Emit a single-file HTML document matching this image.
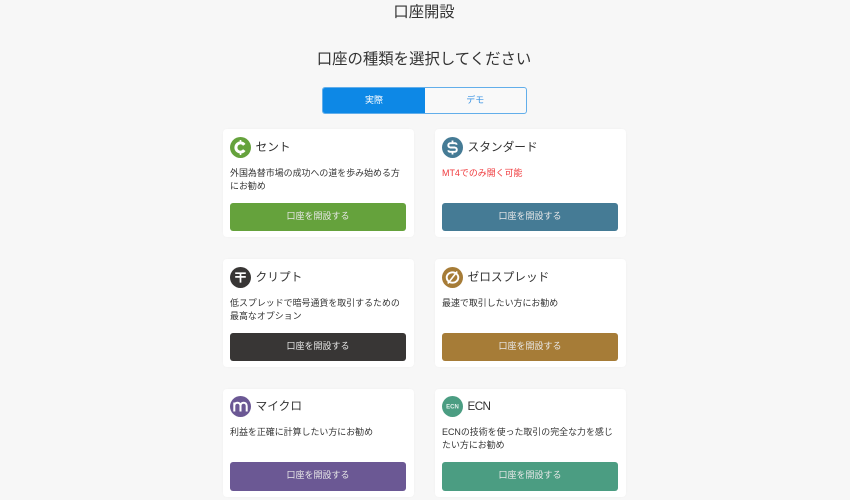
<!DOCTYPE html>
<html lang="ja">
<head>
<meta charset="utf-8">
<title>口座開設</title>
<style>
*{box-sizing:border-box;margin:0;padding:0}
html,body{width:850px;height:500px;overflow:hidden;background:#f7f7f7}
body{position:relative;font-family:"Liberation Sans","Noto Sans CJK JP",sans-serif;color:#333}
.wrap{position:absolute;left:0;top:0;width:850px;height:500px;filter:blur(.3px)}
.abs{position:absolute;white-space:nowrap}
.h1{left:-1px;width:850px;text-align:center;top:2px;font-size:15.3px;line-height:22px;color:#333}
.h2{left:-1px;width:850px;text-align:center;top:48px;font-size:15.4px;line-height:23px;color:#333}
.tabs{position:absolute;left:322px;top:87px;width:204.5px;height:27px;border:1px solid #62aeea;border-radius:3px;overflow:hidden;background:#f9f9f9;display:flex}
.tabs div{font-size:9px;line-height:25px;text-align:center}
.t1{width:102px;background:#0d88e6;color:#fff}
.t2{flex:1;color:#3a94e4}
.card{position:absolute;width:191px;height:108px;background:#fff;border-radius:4px;box-shadow:0 0 2px rgba(0,0,0,.03)}
.ic{position:absolute;left:7px;top:7.5px;width:21px;height:21px}
.name{position:absolute;left:32.5px;top:8.5px;font-size:11.7px;line-height:19px;white-space:nowrap;color:#333}
.desc{position:absolute;left:7px;top:38px;width:178px;font-size:8.95px;line-height:13px;color:#333}
.btn{position:absolute;left:7px;top:73.7px;width:176px;height:28.3px;border-radius:3px;color:#e8e8e8;font-size:9px;line-height:26px;text-align:center}
.r3 .ic{top:7px}
.r3 .name{top:7.5px}
.r3 .desc{top:37px}
.r3 .btn{top:73.3px}
</style>
</head>
<body>
<div class="wrap">
<div class="abs h1">口座開設</div>
<div class="abs h2">口座の種類を選択してください</div>
<div class="tabs"><div class="t1">実際</div><div class="t2">デモ</div></div>

<div class="card" style="left:223px;top:129px">
<svg class="ic" viewBox="0 0 21 21"><circle cx="10.5" cy="10.5" r="10.5" fill="#65a23c"/><path d="M14.27 7.86A4.6 4.6 0 1 0 14.27 13.14" fill="none" stroke="#fff" stroke-width="3"/><path d="M10.5 3v2M10.5 16v2" stroke="#fff" stroke-width="1.6"/></svg>
<div class="name">セント</div>
<div class="desc">外国為替市場の成功への道を歩み始める方<br>にお勧め</div>
<div class="btn" style="background:#65a23c">口座を開設する</div>
</div>

<div class="card" style="left:435px;top:129px">
<svg class="ic" viewBox="0 0 21 21"><circle cx="10.5" cy="10.5" r="10.5" fill="#457b95"/><path d="M14.6 7.8c0-1-.8-1.6-1.7-1.6H8.3c-1.2 0-2 .9-2 2.100s.8 2 2 2.200h4.500c1.200.2 2 1 2 2.200s-.8 2.100-2 2.100H8.100c-.9 0-1.700-.6-1.700-1.600" fill="none" stroke="#fff" stroke-width="1.900"/><path d="M10.500 3.500v2.800M10.500 14.700v2.800" stroke="#fff" stroke-width="1.800"/></svg>
<div class="name">スタンダード</div>
<div class="desc" style="color:#f0393c">MT4でのみ開く可能</div>
<div class="btn" style="background:#457b95">口座を開設する</div>
</div>

<div class="card" style="left:223px;top:259px">
<svg class="ic" viewBox="0 0 21 21"><circle cx="10.500" cy="10.500" r="10.500" fill="#383635"/><path d="M5.200 6.200h10.600M5.200 9.900h10.600M10.500 6.200v9.400" fill="none" stroke="#fff" stroke-width="1.700"/></svg>
<div class="name">クリプト</div>
<div class="desc">低スプレッドで暗号通貨を取引するための<br>最高なオプション</div>
<div class="btn" style="background:#383635">口座を開設する</div>
</div>

<div class="card" style="left:435px;top:259px">
<svg class="ic" viewBox="0 0 21 21"><circle cx="10.500" cy="10.500" r="10.500" fill="#a67c37"/><ellipse cx="10.500" cy="10.500" rx="5.800" ry="5.200" fill="none" stroke="#fff" stroke-width="1.900"/><path d="M5.800 16.500L15.200 4.500" stroke="#fff" stroke-width="1.600"/></svg>
<div class="name">ゼロスプレッド</div>
<div class="desc">最速で取引したい方にお勧め</div>
<div class="btn" style="background:#a67c37">口座を開設する</div>
</div>

<div class="card r3" style="left:223px;top:389px">
<svg class="ic" viewBox="0 0 21 21"><circle cx="10.500" cy="10.500" r="10.500" fill="#6b5894"/><path d="M4.300 15.500V6.500M4.300 10c0-4.400 6.200-4.400 6.200 0v5.500M10.500 10c0-4.400 6.200-4.400 6.200 0v5.500" fill="none" stroke="#fff" stroke-width="2"/></svg>
<div class="name">マイクロ</div>
<div class="desc">利益を正確に計算したい方にお勧め</div>
<div class="btn" style="background:#6b5894">口座を開設する</div>
</div>

<div class="card r3" style="left:435px;top:389px">
<svg class="ic" viewBox="0 0 21 21"><circle cx="10.500" cy="10.500" r="10.500" fill="#4b9d82"/><text x="10.500" y="12.600" text-anchor="middle" font-family="Liberation Sans" font-size="6" font-weight="bold" fill="#e4f2ed">ECN</text></svg>
<div class="name" style="letter-spacing:-.6px">ECN</div>
<div class="desc">ECNの技術を使った取引の完全な力を感じ<br>たい方にお勧め</div>
<div class="btn" style="background:#4b9d82">口座を開設する</div>
</div>
</div>
</body>
</html>
